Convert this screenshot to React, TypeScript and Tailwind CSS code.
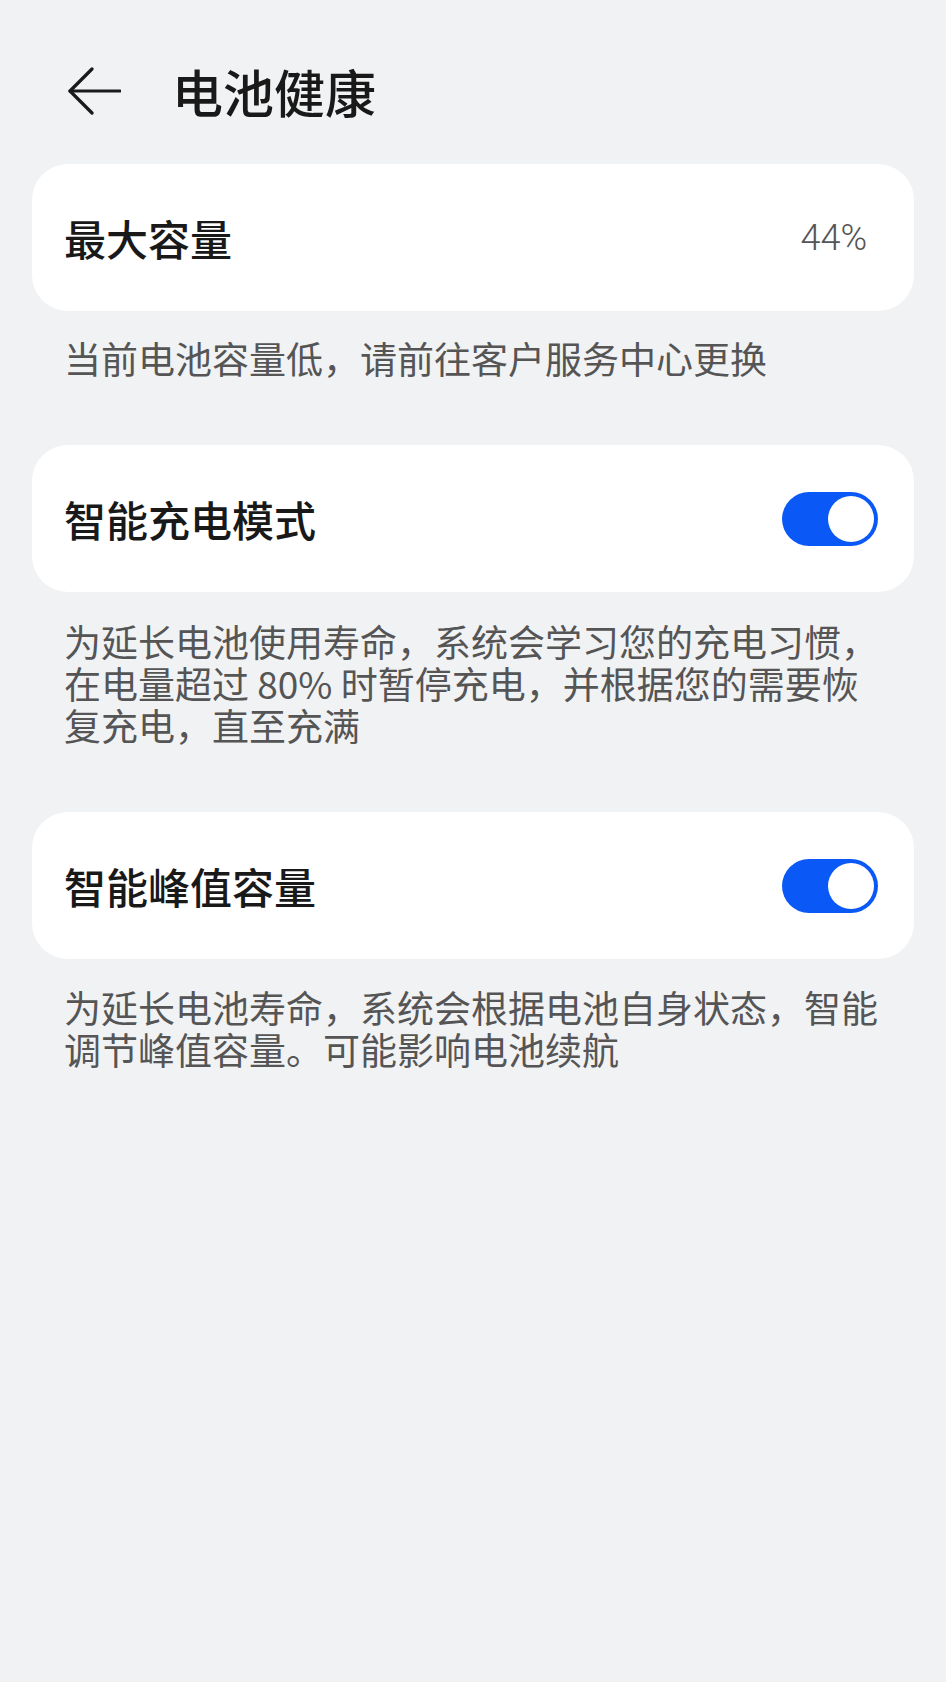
import { useState } from 'react';

const cjk = "font-['Noto_Sans_CJK_SC','Noto_Sans',sans-serif]";

function Toggle({ on, onChange }: { on: boolean; onChange: () => void }) {
  return (
    <button
      onClick={onChange}
      aria-pressed={on}
      className={`flex h-[54px] w-[96px] shrink-0 items-center rounded-full p-[4px] ${
        on ? 'justify-end bg-[#0a59f7]' : 'justify-start bg-[#d5d7db]'
      }`}
    >
      <span className="block h-[46px] w-[46px] rounded-full bg-white" />
    </button>
  );
}

function BackArrow() {
  return (
    <svg width="54" height="48" viewBox="0 0 54 48" fill="none" className="shrink-0">
      <path d="M3 24H53" stroke="#1a1a1a" strokeWidth="3.2" strokeLinecap="round" />
      <path d="M25 2L3 24L25 46" stroke="#1a1a1a" strokeWidth="3.2" strokeLinecap="round" strokeLinejoin="round" />
    </svg>
  );
}

function Note({ lines, className = '' }: { lines: string[]; className?: string }) {
  return (
    <div className={`pl-[64px] text-[37px] text-[#555555] ${className}`}>
      {lines.map((l) => (
        <div key={l} className="h-[42px] whitespace-nowrap leading-[42px]">
          {l}
        </div>
      ))}
    </div>
  );
}

export default function App() {
  const [smartCharge, setSmartCharge] = useState(true);
  const [peakCap, setPeakCap] = useState(true);

  return (
    <div className={`min-h-[1682px] w-[946px] bg-[#f1f2f4] pt-[60px] ${cjk}`}>
      {/* Header */}
      <div className="flex h-[62px] items-center pl-[67px]">
        <BackArrow />
        <h1 className="ml-[51px] text-[51px] font-medium leading-none text-[#191919]">电池健康</h1>
      </div>

      {/* 最大容量 */}
      <div className="mx-[32px] mt-[42px] flex h-[147px] items-center justify-between rounded-[36px] bg-white pl-[32px] pr-[47px]">
        <span className="text-[42px] font-medium leading-none text-[#191919]">最大容量</span>
        <span className="font-['Roboto',sans-serif] text-[36px] font-light leading-none text-[#555555]">44%</span>
      </div>
      <Note className="mt-[26px]" lines={['当前电池容量低，请前往客户服务中心更换']} />

      {/* 智能充电模式 */}
      <div className="mx-[32px] mt-[66px] flex h-[147px] items-center justify-between rounded-[36px] bg-white pl-[32px] pr-[36px]">
        <span className="text-[42px] font-medium leading-none text-[#191919]">智能充电模式</span>
        <Toggle on={smartCharge} onChange={() => setSmartCharge(!smartCharge)} />
      </div>
      <Note
        className="mt-[28px]"
        lines={[
          '为延长电池使用寿命，系统会学习您的充电习惯，',
          '在电量超过 80% 时暂停充电，并根据您的需要恢',
          '复充电，直至充满',
        ]}
      />

      {/* 智能峰值容量 */}
      <div className="mx-[32px] mt-[66px] flex h-[147px] items-center justify-between rounded-[36px] bg-white pl-[32px] pr-[36px]">
        <span className="text-[42px] font-medium leading-none text-[#191919]">智能峰值容量</span>
        <Toggle on={peakCap} onChange={() => setPeakCap(!peakCap)} />
      </div>
      <Note
        className="mt-[27px]"
        lines={['为延长电池寿命，系统会根据电池自身状态，智能', '调节峰值容量。可能影响电池续航']}
      />
    </div>
  );
}
